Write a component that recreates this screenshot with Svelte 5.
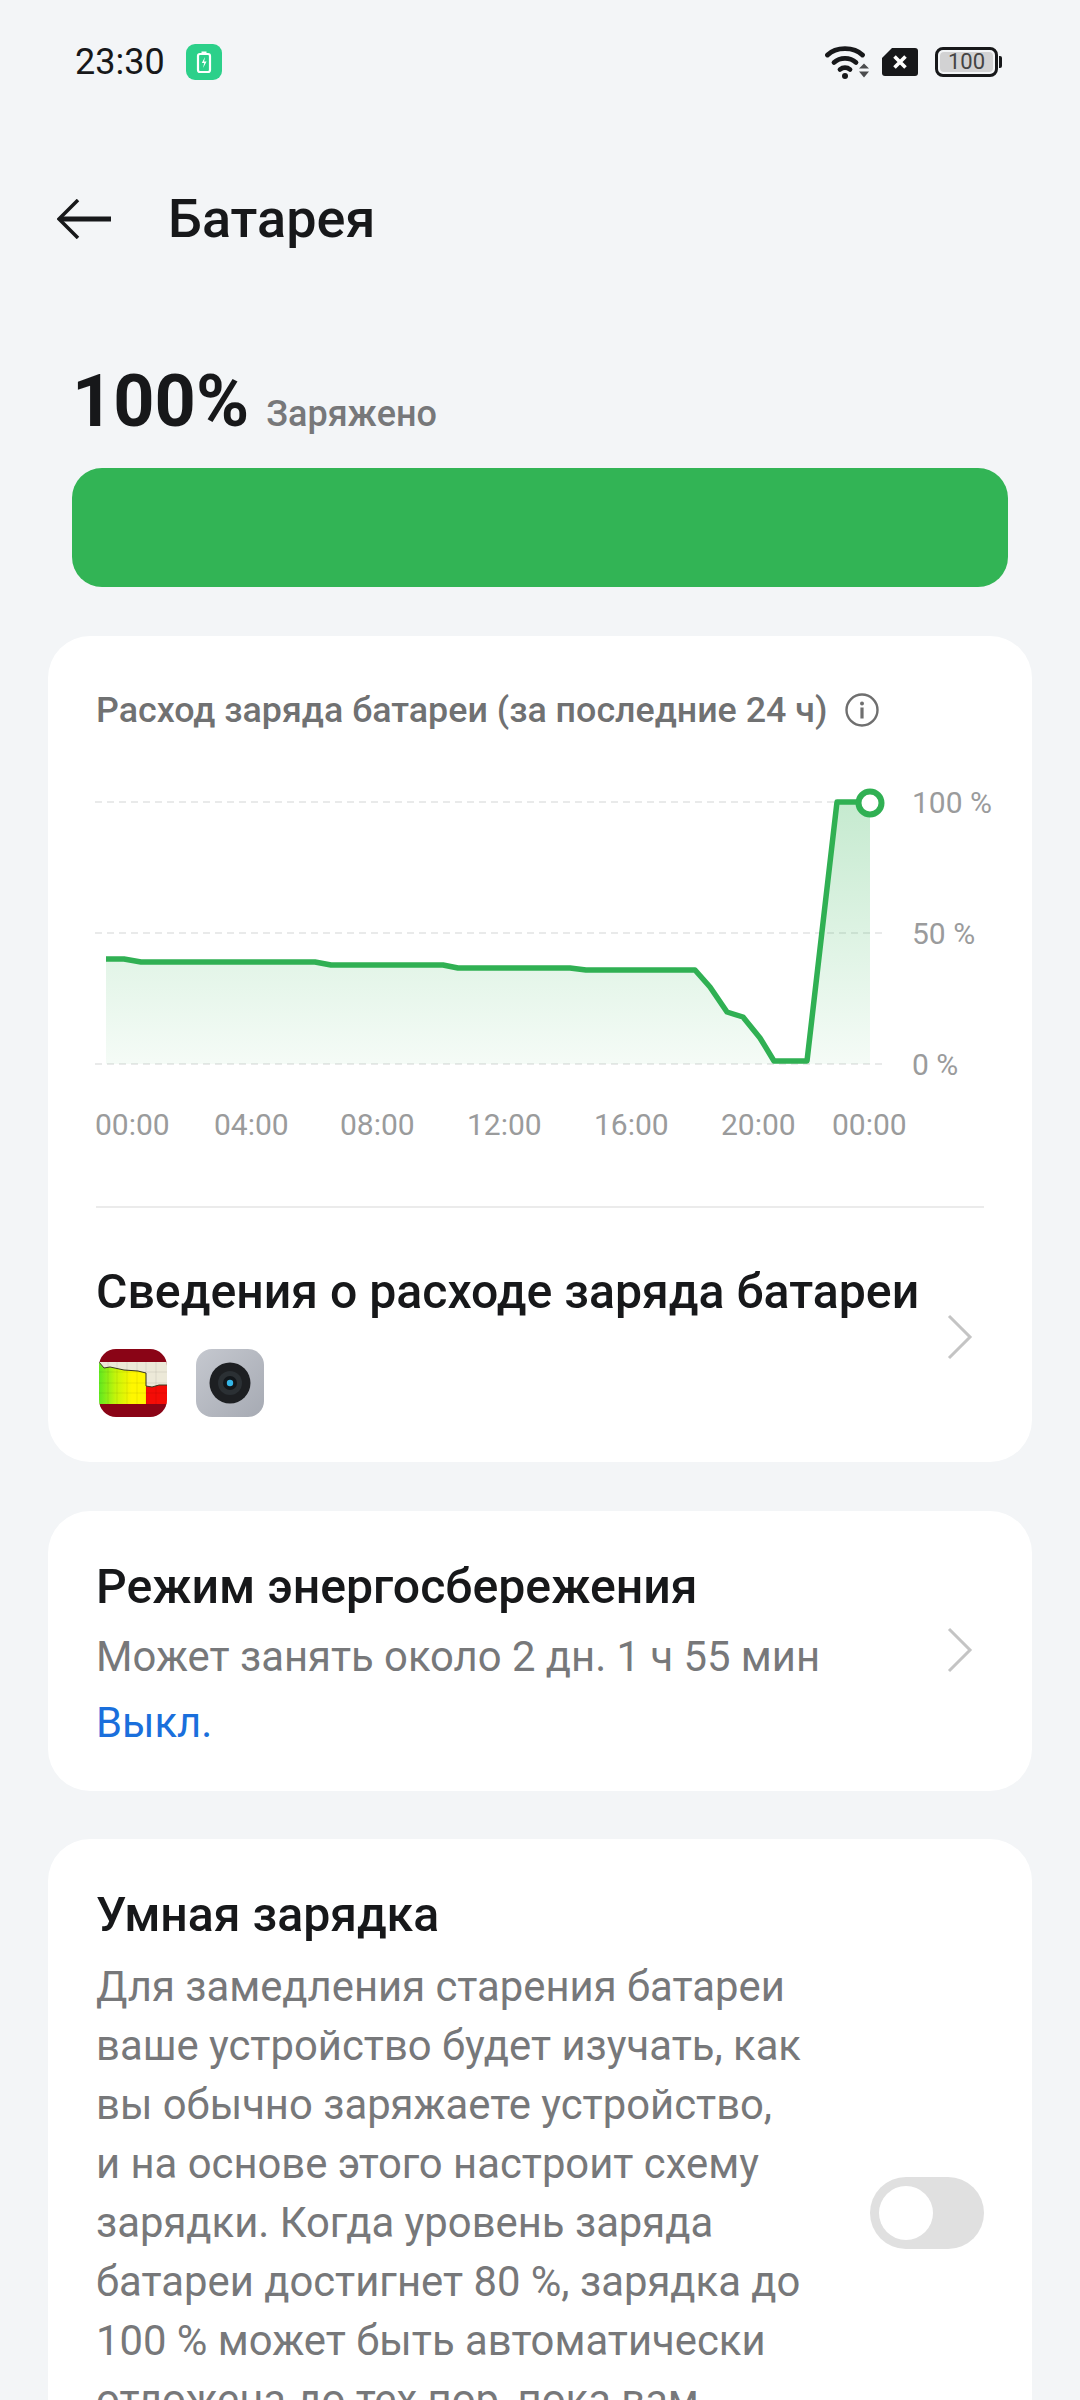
<script>
	const points = [
		[106, 958], [124, 958], [141, 961], [315, 961], [331, 964], [443, 964], [458, 967], [570, 967],
		[586, 969], [695, 969], [710, 986], [727, 1011], [743, 1016], [760, 1037], [774, 1060], [807, 1060],
		[837, 801], [870, 801]
	];
	const ox = 48;
	const oy = 770;
	const line = points.map(([x, y]) => `${x - ox},${y - oy}`).join(' ');
	const area = `${106 - ox},${1063 - oy} ${line} ${870 - ox},${1063 - oy}`;
	const grid = [801, 932, 1063];
	const yLabels = ['100 %', '50 %', '0 %'];
	const xLabels = [
		['00:00', 95], ['04:00', 214], ['08:00', 340], ['12:00', 467], ['16:00', 594], ['20:00', 721], ['00:00', 832]
	];
</script>

<div class="page">
	<div class="status">
		<div class="status-left">
			<span class="time">23:30</span>
			<svg class="charge" viewBox="0 0 36 36" width="36" height="36">
				<rect width="36" height="36" rx="9" fill="#2cd08a" />
				<rect x="12" y="10" width="12" height="18" rx="2" fill="none" stroke="#fff" stroke-width="2.2" />
				<rect x="15.5" y="7.5" width="5" height="2.5" fill="#fff" />
				<path d="M19 13l-3.2 6h2.4l-1.2 5 3.6-6.400h-2.500z" fill="#fff" />
			</svg>
		</div>
		<div class="status-right">
			<svg viewBox="0 0 46 36" width="46" height="36">
				<g fill="none" stroke="#17181a" stroke-width="4.800" stroke-linecap="round">
					<path d="M2.500 11C11 2.500 29 2.500 37.500 11" />
					<path d="M9 18.500C15 13 25 13 31 18.500" />
					<path d="M15 25.500C18 23 22 23 25 25.500" />
				</g>
				<circle cx="20" cy="32" r="3" fill="#17181a" />
				<path d="M34 24.500l5-5 5 5zM34 27.500h10l-5 6z" fill="#4b4c4e" />
			</svg>
			<svg viewBox="0 0 36 28" width="36" height="28">
				<path d="M10 0h23a3 3 0 0 1 3 3v22a3 3 0 0 1-3 3H3a3 3 0 0 1-3-3V10z" fill="#17181a" />
				<path d="M12.500 8.500l11 11M23.500 8.500l-11 11" stroke="#fff" stroke-width="3.600" />
			</svg>
			<div class="battery">
				<div class="battery-body"><span>100</span></div>
				<div class="battery-nub"></div>
			</div>
		</div>
	</div>

	<header class="head">
		<svg class="back" viewBox="0 0 54 40" width="54" height="40">
			<path d="M21 1L2 20l19 19" fill="none" stroke="#17181a" stroke-width="3.500" />
			<path d="M3 20h51" fill="none" stroke="#17181a" stroke-width="5" />
		</svg>
		<h1>Батарея</h1>
	</header>

	<div class="level">
		<span class="pct">100%</span>
		<span class="state">Заряжено</span>
	</div>
	<div class="bar"></div>

	<section class="card usage">
		<div class="usage-title">
			<span>Расход заряда батареи (за последние 24 ч)</span>
			<svg viewBox="0 0 34 34" width="34" height="34">
				<circle cx="17" cy="17" r="15.500" fill="none" stroke="#6f6f6f" stroke-width="2.400" />
				<circle cx="17" cy="10.500" r="2" fill="#6f6f6f" />
				<rect x="15.400" y="14.500" width="3.200" height="11" fill="#6f6f6f" />
			</svg>
		</div>

		<svg class="chart" viewBox="0 0 984 380" width="984" height="380">
			<defs>
				<linearGradient id="fade" x1="0" y1="0" x2="0" y2="1">
					<stop offset="0" stop-color="#32b455" stop-opacity="0.28" />
					<stop offset="1" stop-color="#32b455" stop-opacity="0.05" />
				</linearGradient>
			</defs>
			{#each grid as y, i}
				<line x1="47" x2="835" y1={y - oy} y2={y - oy} stroke="#e2e3e4" stroke-width="1.500" stroke-dasharray="7 5" />
				<text class="axis" x="864" y={y - oy + 11}>{yLabels[i]}</text>
			{/each}
			<polygon points={area} fill="url(#fade)" />
			<polyline points={line} fill="none" stroke="#30b053" stroke-width="5.500" stroke-linejoin="round" />
			<circle cx="822" cy="32" r="11.500" fill="#fff" stroke="#30b053" stroke-width="6" />
			{#each xLabels as [label, x]}
				<text class="axis" x={x - ox} y={1134 - oy}>{label}</text>
			{/each}
		</svg>

		<div class="divider"></div>

		<div class="row details">
			<div class="row-main">
				<h2>Сведения о расходе заряда батареи</h2>
				<div class="apps">
					<svg viewBox="0 0 68 68" width="68" height="68">
						<defs>
							<clipPath id="app-clip"><rect width="68" height="68" rx="17" /></clipPath>
							<linearGradient id="app-fill" x1="0" y1="0" x2="1" y2="0">
								<stop offset="0" stop-color="#5fe81f" />
								<stop offset="0.35" stop-color="#c4f50a" />
								<stop offset="0.7" stop-color="#fff700" />
							</linearGradient>
						</defs>
						<g clip-path="url(#app-clip)">
							<rect width="68" height="68" fill="#8a0416" />
							<rect y="13" width="68" height="42" fill="#ece9d8" />
							<path d="M0 13l5 6 6-1 14 3 14 1 8 2v31H0z" fill="url(#app-fill)" />
							<path d="M47 37l6 1 7-2h8v19H47z" fill="#f40c06" />
							<path d="M0 13l5 6 6-1 14 3 14 1 8 2v13l6 1 7-2h8" fill="none" stroke="#3a3a20" stroke-width="1" />
							<path d="M9 13v42M18 13v42M28 13v42M38 13v42M47 13v42M57 13v42M0 23h68M0 34h68M0 44h68" stroke="#000" stroke-opacity="0.1" stroke-width="0.700" />
						</g>
					</svg>
					<svg viewBox="0 0 68 68" width="68" height="68">
						<defs>
							<linearGradient id="cam-bg" x1="0" y1="0" x2="1" y2="1">
								<stop offset="0" stop-color="#c5c8cf" />
								<stop offset="1" stop-color="#a6aab3" />
							</linearGradient>
						</defs>
						<rect width="68" height="68" rx="16" fill="url(#cam-bg)" />
						<circle cx="34" cy="34" r="20.500" fill="#1d1f22" />
						<circle cx="34" cy="34" r="12" fill="#2b3034" />
						<circle cx="34" cy="34" r="7" fill="#12161a" />
						<circle cx="34" cy="34" r="3.200" fill="#34b6e8" />
					</svg>
				</div>
			</div>
			<svg class="chevron" viewBox="0 0 26 46" width="26" height="46">
				<path d="M2 2l21 21L2 44" fill="none" stroke="#c4c4c4" stroke-width="3" />
			</svg>
		</div>
	</section>

	<section class="card row saver">
		<div class="row-main">
			<h2>Режим энергосбережения</h2>
			<p class="muted">Может занять около 2 дн. 1 ч 55 мин</p>
			<p class="link">Выкл.</p>
		</div>
		<svg class="chevron" viewBox="0 0 26 46" width="26" height="46">
			<path d="M2 2l21 21L2 44" fill="none" stroke="#c4c4c4" stroke-width="3" />
		</svg>
	</section>

	<section class="card row smart">
		<div class="row-main">
			<h2>Умная зарядка</h2>
			<p class="muted long">
				Для замедления старения батареи<br />
				ваше устройство будет изучать, как<br />
				вы обычно заряжаете устройство,<br />
				и на основе этого настроит схему<br />
				зарядки. Когда уровень заряда<br />
				батареи достигнет 80 %, зарядка до<br />
				100 % может быть автоматически<br />
				отложена до тех пор, пока вам
			</p>
		</div>
		<div class="toggle"><div class="knob"></div></div>
	</section>
</div>

<style>
	:global(body) {
		margin: 0;
		background: #f3f5f7;
	}
	.page {
		height: 2400px;
		overflow: hidden;
		background: #f3f5f7;
		font-family: Roboto, 'Liberation Sans', sans-serif;
		color: #17181a;
	}
	.status {
		display: flex;
		justify-content: space-between;
		align-items: center;
		padding: 44px 78px 0 75px;
		height: 36px;
	}
	.status-left {
		display: flex;
		align-items: center;
		gap: 21px;
	}
	.time {
		font-size: 36px;
	}
	.status-right {
		display: flex;
		align-items: center;
		gap: 11px;
	}
	.battery {
		display: flex;
		align-items: center;
		gap: 1px;
		margin-left: 6px;
	}
	.battery-body {
		width: 63px;
		height: 30px;
		box-sizing: border-box;
		border: 3px solid #17181a;
		border-radius: 8px;
		padding: 2px;
		display: flex;
	}
	.battery-body span {
		flex: 1;
		background: #d2d2d3;
		border-radius: 4px;
		font-size: 22px;
		line-height: 20px;
		text-align: center;
		color: #444;
	}
	.battery-nub {
		width: 3px;
		height: 12px;
		background: #17181a;
		border-radius: 0 2px 2px 0;
	}
	.head {
		display: flex;
		align-items: center;
		gap: 57px;
		padding: 0 0 0 57px;
		margin-top: 109px;
		height: 60px;
	}
	h1 {
		margin: 0;
		font-size: 54px;
		font-weight: 500;
		line-height: 60px;
	}
	.level {
		display: flex;
		align-items: baseline;
		gap: 17px;
		margin: 108px 0 0 72px;
		height: 90px;
	}
	.pct {
		font-size: 72px;
		font-weight: 700;
		line-height: 90px;
	}
	.state {
		font-size: 36px;
		font-weight: 500;
		color: #77787a;
	}
	.bar {
		margin: 21px 72px 0;
		height: 119px;
		border-radius: 30px;
		background: #32b455;
	}
	.card {
		margin: 0 48px;
		background: #fff;
		border-radius: 42px;
		box-sizing: border-box;
	}
	.usage {
		margin-top: 49px;
		height: 826px;
		padding-top: 54px;
	}
	.usage-title {
		display: flex;
		align-items: center;
		gap: 18px;
		padding-left: 48px;
		height: 40px;
		font-size: 35.800px;
		font-weight: 500;
		color: #707172;
	}
	.chart {
		display: block;
		margin-top: 41px;
	}
	.axis {
		font-family: Roboto, 'Liberation Sans', sans-serif;
		font-size: 30px;
		fill: #9a9b9c;
	}
	.divider {
		height: 2px;
		margin: 55px 48px 0;
		background: #ebebeb;
	}
	.row {
		display: flex;
		align-items: center;
		justify-content: space-between;
	}
	.row-main {
		min-width: 0;
	}
	.details {
		padding: 55px 59px 0 48px;
	}
	.details .chevron {
		margin-bottom: 6px;
	}
	h2 {
		margin: 0;
		font-size: 48.200px;
		font-weight: 500;
		line-height: 58px;
		color: #17181a;
	}
	.apps {
		display: flex;
		gap: 29px;
		margin: 28px 0 0 3px;
	}
	.saver {
		margin-top: 49px;
		height: 280px;
		padding: 47px 59px 0 48px;
		align-items: flex-start;
	}
	.saver .chevron {
		margin-top: 69px;
	}
	p {
		margin: 0;
	}
	.muted {
		font-size: 41.800px;
		line-height: 59px;
		color: #77787a;
		margin-top: 11px;
	}
	.link {
		font-size: 41.800px;
		line-height: 59px;
		margin-top: 7px;
		color: #1a6fdc;
	}
	.smart {
		margin-top: 48px;
		padding: 47px 48px 0;
		align-items: flex-start;
		height: 900px;
	}
	.muted.long {
		margin-top: 13px;
	}
	.toggle {
		width: 114px;
		height: 72px;
		margin-top: 291px;
		border-radius: 36px;
		background: #e0e0e0;
		flex: none;
		padding: 9px;
		box-sizing: border-box;
	}
	.knob {
		width: 54px;
		height: 54px;
		border-radius: 50%;
		background: #fff;
	}
</style>
